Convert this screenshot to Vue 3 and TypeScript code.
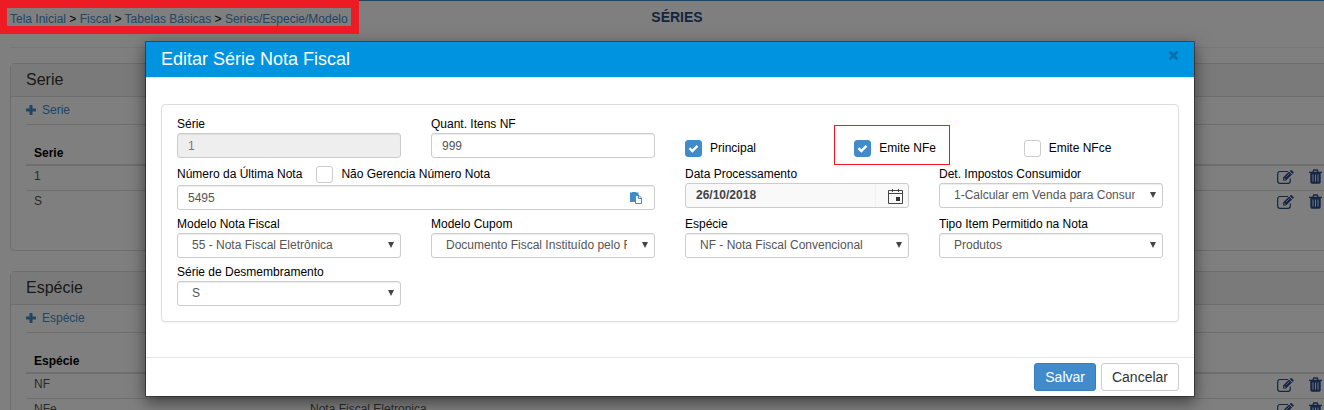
<script setup lang="ts">
import { ref } from 'vue'

interface Section {
  title: string
  rows: { code: string; description: string }[]
}

const crumbs = ['Tela Inicial', 'Fiscal', 'Tabelas Básicas', 'Series/Especie/Modelo']

const sections: Section[] = [
  {
    title: 'Serie',
    rows: [
      { code: '1', description: '' },
      { code: 'S', description: '' },
    ],
  },
  {
    title: 'Espécie',
    rows: [
      { code: 'NF', description: '' },
      { code: 'NFe', description: 'Nota Fiscal Eletronica' },
    ],
  },
]

const flags = ref([
  { id: 'principal', label: 'Principal', checked: true, marked: false },
  { id: 'emite-nfe', label: 'Emite NFe', checked: true, marked: true },
  { id: 'emite-nfce', label: 'Emite NFce', checked: false, marked: false },
])

const selects = [
  { id: 'impostos', label: 'Det. Impostos Consumidor', value: '1-Calcular em Venda para Consumidor' },
  { id: 'modelo-nota', label: 'Modelo Nota Fiscal', value: '55 - Nota Fiscal Eletrônica' },
  { id: 'modelo-cupom', label: 'Modelo Cupom', value: 'Documento Fiscal Instituído pelo Fisco' },
  { id: 'especie', label: 'Espécie', value: 'NF - Nota Fiscal Convencional' },
  { id: 'tipo-item', label: 'Tipo Item Permitido na Nota', value: 'Produtos' },
  { id: 'desmembramento', label: 'Série de Desmembramento', value: 'S' },
]

const serie = ref('1')
const quantity = ref('999')
const lastNumber = ref('5495')
const unmanaged = ref(false)
const date = ref('26/10/2018')
</script>

<template>
  <div class="screen">
    <div class="page">
      <header class="top">
        <nav class="crumbs">
          <template v-for="(crumb, i) in crumbs" :key="crumb">
            <span v-if="i"> &gt; </span><a href="#">{{ crumb }}</a>
          </template>
        </nav>
        <h1>SÉRIES</h1>
      </header>

      <section v-for="section in sections" :key="section.title" class="panel">
        <h2>{{ section.title }}</h2>
        <div class="panel-body">
          <a href="#" class="add">
            <svg width="10" height="10" viewBox="0 0 10 10"><path d="M3.500 0h3v3.500H10v3H6.500V10h-3V6.500H0v-3h3.500z" fill="currentColor" /></svg>
            {{ section.title }}
          </a>
          <table>
            <thead>
              <tr><th class="code">{{ section.title }}</th><th></th><th class="actions"></th></tr>
            </thead>
            <tbody>
              <tr v-for="row in section.rows" :key="row.code">
                <td>{{ row.code }}</td>
                <td>{{ row.description }}</td>
                <td class="actions">
                  <div class="action-list">
                    <button type="button" aria-label="Editar">
                      <svg width="17" height="14" viewBox="0 0 17 14">
                        <path d="M11 1.500H3A2.300 2.300 0 0 0 .7 3.800V11A2.300 2.300 0 0 0 3 13.300h8A2.300 2.300 0 0 0 13.300 11V8.500" fill="none" stroke="currentColor" stroke-width="1.200" />
                        <path d="M6 10.500V7.500L12 1.500l3 3-6 6zM12.700.9l.9-.7q.6-.4 1.200.1l1.700 1.700q.5.600 0 1.200l-.8.700z" fill="currentColor" />
                        <path d="M7.300 8v1.300h1.300M9 7l3.500-3.500" fill="none" stroke="#fff" stroke-width=".7" />
                      </svg>
                    </button>
                    <button type="button" aria-label="Excluir">
                      <svg width="13" height="15" viewBox="0 0 13 15">
                        <path d="M4 3l.7-2h3.600L9 3M0 3.300h13" fill="none" stroke="currentColor" stroke-width="1.300" />
                        <path d="M1.300 3.500h10.400V13q0 1.800-1.500 1.800H2.800Q1.300 14.800 1.300 13z" fill="currentColor" />
                        <path d="M4 5.500v7M6.500 5.500v7M9 5.500v7" stroke="#fff" stroke-width=".9" />
                      </svg>
                    </button>
                  </div>
                </td>
              </tr>
            </tbody>
          </table>
        </div>
      </section>
    </div>

    <div class="backdrop">
      <form class="modal" role="dialog" aria-labelledby="modal-title" @submit.prevent>
        <header class="modal-header">
          <h2 id="modal-title">Editar Série Nota Fiscal</h2>
          <button type="button" class="close" aria-label="Fechar">
            <svg width="11" height="11" viewBox="0 0 11 11"><path d="M1.500 1.500l8 8M9.500 1.500l-8 8" stroke="currentColor" stroke-width="2.500" /></svg>
          </button>
        </header>

        <div class="modal-body">
          <div class="form-grid">
            <div class="field">
              <label for="serie">Série</label>
              <input id="serie" v-model="serie" class="control" type="text" disabled />
            </div>
            <div class="field">
              <label for="quantity">Quant. Itens NF</label>
              <input id="quantity" v-model="quantity" class="control" type="text" />
            </div>
            <div class="flags">
              <div v-for="flag in flags" :key="flag.id" class="flag">
                <input :id="flag.id" v-model="flag.checked" class="check" type="checkbox" />
                <label :for="flag.id">{{ flag.label }}</label>
                <span v-if="flag.marked" class="mark"></span>
              </div>
            </div>

            <div class="field wide">
              <div class="label-row">
                <label for="last-number">Número da Última Nota</label>
                <input id="unmanaged" v-model="unmanaged" class="check" type="checkbox" />
                <label for="unmanaged">Não Gerencia Número Nota</label>
              </div>
              <div class="with-icon">
                <input id="last-number" v-model="lastNumber" class="control" type="text" />
                <button type="button" class="paste" aria-label="Colar">
                  <svg width="12" height="12" viewBox="0 0 12 12">
                    <path d="M0 .5h2V0h4v.5h2.500V10H0z" fill="#428bca" />
                    <path d="M5.500 3.500h3.500l2.500 2.500v5.500h-6zM8.500 3.500v3h3" fill="#fff" stroke="#428bca" />
                  </svg>
                </button>
              </div>
            </div>
            <div class="field">
              <label for="date">Data Processamento</label>
              <div class="date">
                <input id="date" v-model="date" type="text" />
                <button type="button" aria-label="Abrir calendário">
                  <svg width="15" height="16" viewBox="0 0 15 16">
                    <path d="M.5 2.500h14v13H.5zM.5 5.500h14M4.500 1v3M10.500 1v3" fill="none" stroke="#444" />
                    <path d="M8 9h4v4H8z" fill="#333" />
                  </svg>
                </button>
              </div>
            </div>
            <div v-for="item in selects" :key="item.id" class="field">
              <label :for="item.id">{{ item.label }}</label>
              <div class="with-icon">
                <select :id="item.id" class="control">
                  <option>{{ item.value }}</option>
                </select>
                <svg class="arrow" width="6" height="6" viewBox="0 0 6 6"><path d="M0 0h6L3 6z" fill="#444" /></svg>
              </div>
            </div>
          </div>
        </div>

        <footer class="modal-footer">
          <button type="submit" class="btn primary">Salvar</button>
          <button type="button" class="btn">Cancelar</button>
        </footer>
      </form>
    </div>

    <div class="trail-mark"></div>
  </div>
</template>

<style>
body {
  margin: 0;
}
</style>

<style scoped>
* {
  box-sizing: border-box;
}
.screen {
  position: relative;
  height: 100vh;
  overflow: hidden;
  font-family: "Liberation Sans", Arial, sans-serif;
  font-size: 12px;
  line-height: 17px;
  color: #555;
  background: #fff;
}
button,
input,
select {
  font: inherit;
  color: inherit;
  margin: 0;
}
button {
  padding: 0;
  border: 0;
  background: none;
}
svg {
  display: block;
}
.page {
  width: calc(100% + 16px);
  padding: 0 10px;
  border-top: 1px solid #428bca;
}
a {
  color: #428bca;
  text-decoration: none;
}
.top {
  display: grid;
  grid-template-columns: 1fr auto 1fr;
  align-items: start;
  height: 47px;
  margin-bottom: 15px;
  padding-top: 8px;
  border-bottom: 1px solid #eee;
}
.crumbs {
  padding-top: 2px;
  white-space: nowrap;
  color: #000;
}
h1 {
  margin: 0 0 0 14px;
  font-size: 14px;
  line-height: 16px;
  color: #2a4b7c;
}
.panel {
  min-height: 188px;
  margin: 0 -10px 20px 0;
  border: 1px solid #ddd;
  border-radius: 4px;
}
.panel h2 {
  margin: 0;
  padding: 6px 15px;
  border-bottom: 1px solid #ddd;
  background: #f5f5f5;
  font-size: 16px;
  font-weight: 400;
  line-height: 20px;
  color: #333;
}
.panel-body {
  padding: 0 15px;
}
.add {
  display: flex;
  align-items: center;
  gap: 6px;
  height: 28px;
  margin-bottom: 14px;
  border-bottom: 1px solid #ddd;
}
.add svg {
  margin-bottom: 2px;
}
table {
  width: 100%;
  border-collapse: separate;
  border-spacing: 0;
  table-layout: fixed;
}
th,
td {
  height: 25px;
  padding: 2px 8px 0;
  text-align: left;
  vertical-align: top;
}
th {
  height: 27px;
  padding: 0 8px 2px;
  border-bottom: 2px solid #ddd;
  vertical-align: bottom;
  color: #000;
}
td {
  border-bottom: 1px solid #ddd;
}
tr:last-child td {
  border-bottom: 0;
}
.code {
  width: 276px;
}
.actions {
  width: 47px;
  padding: 3px 0 0;
}
.action-list {
  display: flex;
  align-items: center;
  gap: 15px;
  color: #2a4b8c;
}
.backdrop {
  position: absolute;
  inset: 0 -16px 0 0;
  padding: 41px 145px 0;
  background: rgba(0, 0, 0, 0.5);
}
.modal {
  border: 1px solid rgba(0, 0, 0, 0.4);
  background: #fff;
  background-clip: padding-box;
  box-shadow: 0 5px 15px rgba(0, 0, 0, 0.5);
}
.modal-header {
  display: flex;
  justify-content: space-between;
  align-items: center;
  padding: 0 15px;
  height: 36px;
  border-bottom: 1px solid #e5e5e5;
  background: #0094e0;
  background-clip: padding-box;
  color: #fff;
}
.modal-header h2 {
  margin: 0;
  font-size: 18px;
  font-weight: 400;
  line-height: 35px;
}
.close {
  margin-bottom: 8px;
  color: #0070a8;
}
.modal-body {
  padding: 26px 15px 35px;
}
.form-grid {
  display: grid;
  grid-template-columns: repeat(4, minmax(0, 1fr));
  gap: 6px 30px;
  padding: 11px 15px 15px;
  border: 1px solid #ddd;
  border-radius: 4px;
  box-shadow: 0 1px 1px rgba(0, 0, 0, 0.05);
}
.field label,
.flag label {
  color: #000;
}
.field > label {
  display: block;
}
.wide {
  grid-column: span 2;
}
.control {
  display: block;
  width: 100%;
  height: 25px;
  padding: 0 10px;
  border: 1px solid #ccc;
  border-radius: 3px;
  background: #fff;
  box-shadow: inset 0 1px 1px rgba(0, 0, 0, 0.075);
  color: #555;
}
.control:disabled {
  background: #eee;
  color: #777;
}
select.control {
  appearance: none;
  padding: 0 27px 0 14px;
}
.with-icon {
  position: relative;
}
.arrow {
  position: absolute;
  top: 9px;
  right: 7px;
  pointer-events: none;
}
.paste {
  position: absolute;
  top: 7px;
  right: 13px;
}
.flags {
  grid-column: span 2;
  display: grid;
  grid-template-columns: repeat(3, 1fr);
  align-items: end;
  height: 44px;
  margin-right: -30px;
  padding-bottom: 3px;
}
.flag,
.label-row {
  position: relative;
  display: flex;
  align-items: center;
  gap: 8px;
}
.label-row {
  padding-bottom: 2px;
}
.label-row .check {
  margin-left: 6px;
}
.check {
  appearance: none;
  width: 17px;
  height: 17px;
  border: 1px solid #ccc;
  border-radius: 3px;
  background: #fff;
}
.check:checked {
  border-color: #428bca;
  background: #428bca url("data:image/svg+xml,%3Csvg xmlns='http://www.w3.org/2000/svg' viewBox='0 0 15 15'%3E%3Cpath d='M3.500 7.200l2.800 2.800 5.200-5.200' fill='none' stroke='white' stroke-width='2.400'/%3E%3C/svg%3E") center / 15px no-repeat;
}
.mark {
  position: absolute;
  top: -15px;
  left: -20px;
  width: 116px;
  height: 40px;
  border: 1px solid #ed1c24;
  pointer-events: none;
}
.date {
  display: flex;
  align-items: center;
  height: 25px;
  padding-right: 5px;
  border: 1px solid #ccc;
  border-radius: 3px;
  background: #f9f9f9;
}
.date input {
  flex: 1;
  min-width: 0;
  height: 23px;
  margin-right: 12px;
  padding: 0 10px 2px;
  border: 0;
  border-right: 1px solid #f2f2f2;
  background: none;
  font-weight: 700;
  color: #444;
}
.modal-footer {
  display: flex;
  justify-content: flex-end;
  gap: 5px;
  padding: 5px 15px;
  border-top: 1px solid #e5e5e5;
}
.btn {
  height: 28px;
  padding: 0 10px;
  border: 1px solid #ccc;
  border-radius: 3px;
  background: #fff;
  font-size: 14px;
  color: #333;
}
.btn.primary {
  border-color: #357ebd;
  background: #428bca;
  color: #fff;
}
.trail-mark {
  position: absolute;
  top: 0;
  left: 0;
  width: 359px;
  height: 34px;
  border: 8px solid #ed1c24;
  border-left-width: 7px;
  pointer-events: none;
}
</style>
